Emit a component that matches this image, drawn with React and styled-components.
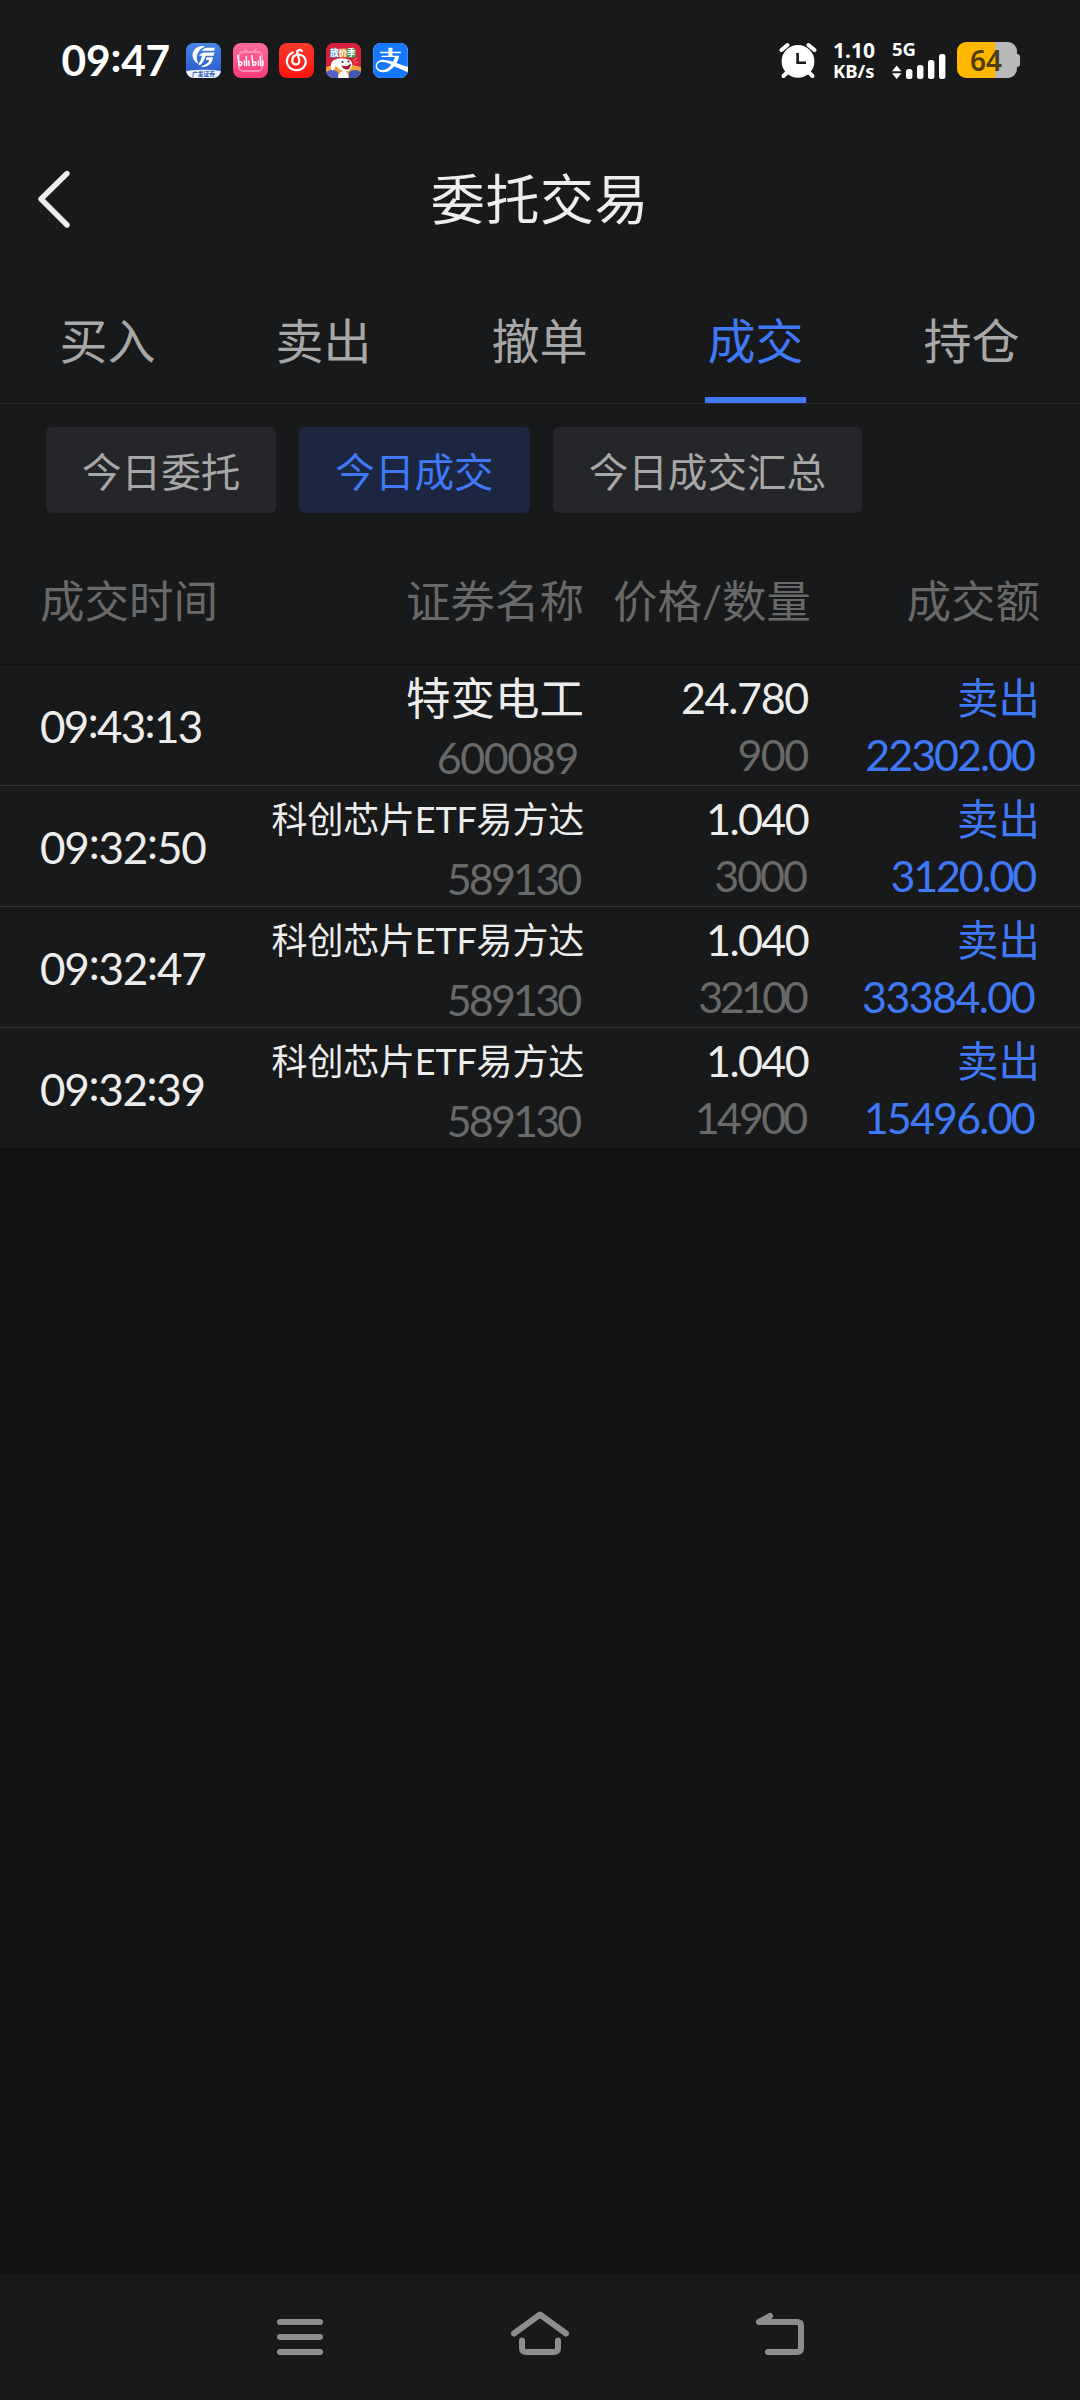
import React from "react";
import styled, { createGlobalStyle } from "styled-components";
import { SiAlipay } from "react-icons/si";

const BLUE = "#4079f8";
const PANEL = "#17191a";
const GREY = "#696969";
const LIGHT = "#ededed";

const GlobalStyle = createGlobalStyle`
  * { box-sizing: border-box; }
  body {
    margin: 0;
    background: #0f1113;
    font-family: Lato, "Noto Sans CJK SC", sans-serif;
  }
`;

const Screen = styled.div`
  width: 1080px;
  height: 2400px;
  display: flex;
  flex-direction: column;
  background: #0f1113;
  overflow: hidden;
`;

const StatusBar = styled.header`
  height: 120px;
  padding: 0 60px;
  display: flex;
  justify-content: space-between;
  align-items: center;
  background: ${PANEL};
`;

const StatusLeft = styled.div`
  display: flex;
  align-items: center;
`;

const Clock = styled.div`
  width: 126px;
  padding-left: 1.5px;
  font-size: 42.5px;
  line-height: 58px;
  font-weight: 700;
  color: #fff;
  white-space: nowrap;
  letter-spacing: ${(p) => p.$spacing}px;
`;

const Colon = styled.span`
  vertical-align: ${(p) => p.$lift}px;
  line-height: 0;
`;

const Apps = styled.div`
  display: flex;
  gap: 11.7px;
`;

const AppIcon = styled.div`
  width: 35px;
  height: 35px;
  border-radius: 8px;
  overflow: hidden;
  display: flex;
  align-items: center;
  justify-content: center;
  color: #fff;
  background: ${(p) => p.$bg};
`;

const StatusRight = styled.div`
  display: flex;
  align-items: center;
  color: #fff;
`;

const Speed = styled.div`
  width: 43px;
  margin-left: 16px;
  display: flex;
  flex-direction: column;
  font-family: "Noto Sans", sans-serif;
  font-weight: 700;
  white-space: nowrap;
`;

const SpeedValue = styled.span`
  font-size: 21px;
  line-height: 21px;
`;

const SpeedUnit = styled.span`
  font-size: 18.5px;
  line-height: 20px;
`;

const Signal = styled.div`
  width: 54px;
  margin: 0 11px 0 16px;
  display: flex;
  flex-direction: column;
  font-family: "Noto Sans", sans-serif;
`;

const Network = styled.span`
  font-size: 18.5px;
  line-height: 14px;
  font-weight: 700;
  height: 12px;
`;

const Battery = styled.div`
  display: flex;
  align-items: center;
`;

const BatteryBody = styled.div`
  width: 60px;
  height: 36px;
  padding-right: 2px;
  border-radius: 9px;
  background: linear-gradient(90deg, #ffb800 ${(p) => p.$level}%, #b9b9b9 ${(p) => p.$level}%);
  color: #4f3d0c;
  font-family: "Noto Sans", sans-serif;
  font-size: 28px;
  font-weight: 600;
  line-height: 36px;
  text-align: center;
`;

const BatteryTip = styled.div`
  width: 3px;
  height: 13px;
  border-radius: 0 3px 3px 0;
  background: #b9b9b9;
`;

const TitleBar = styled.div`
  height: 160px;
  display: grid;
  grid-template-columns: 110px 1fr 110px;
  align-items: center;
  background: ${PANEL};
`;

const BackButton = styled.button`
  border: 0;
  padding: 0 0 3px 36px;
  background: none;
  display: flex;
  color: ${LIGHT};
`;

const Title = styled.h1`
  margin: 0;
  text-align: center;
  font-size: 54px;
  font-weight: 400;
  line-height: 160px;
  letter-spacing: 0.6px;
  color: ${LIGHT};
`;

const Tabs = styled.nav`
  height: 124px;
  display: grid;
  grid-template-columns: repeat(5, 1fr);
  border-bottom: 1px solid #28292b;
  background: ${PANEL};
`;

const Tab = styled.div`
  display: flex;
  justify-content: center;
  padding-right: 1px;
  color: ${(p) => (p.$active ? BLUE : "#a7a7a7")};
`;

const TabLabel = styled.span`
  width: 101px;
  text-align: center;
  font-size: 48px;
  line-height: 121px;
  height: 123px;
  white-space: nowrap;
  border-bottom: 6px solid ${(p) => (p.$active ? BLUE : "transparent")};
`;

const Chips = styled.div`
  height: 133px;
  padding: 23px 46px;
  display: flex;
  gap: 23px;
  background: ${PANEL};
  border-bottom: 1px solid #1b1d1f;
`;

const Chip = styled.div`
  height: 86px;
  padding: 0 36px;
  border-radius: 6px;
  font-size: 39.6px;
  line-height: 89px;
  color: ${(p) => (p.$active ? BLUE : "#a7a7a7")};
  background: ${(p) => (p.$active ? "#1d2640" : "#252629")};
`;

const Columns = styled.div`
  padding: 0 40px;
  display: grid;
  grid-template-columns: 200px 344px 227px 229px;
`;

const TableHead = styled(Columns)`
  height: 128px;
  font-size: 44.5px;
  line-height: 128px;
  color: ${GREY};
  background: ${PANEL};
  border-bottom: 1px solid #0f1113;
`;

const HeadCell = styled.div`
  text-align: ${(p) => (p.$left ? "left" : "right")};
  white-space: nowrap;
`;

const TradeRow = styled(Columns)`
  height: ${(p) => (p.$last ? 120 : 121)}px;
  background: ${PANEL};
  border-bottom: ${(p) => (p.$last ? 0 : 1)}px solid #343537;
`;

const Time = styled.div`
  font-size: 44px;
  line-height: 122px;
  letter-spacing: ${(p) => p.$spacing}px;
  color: ${LIGHT};
  white-space: nowrap;
`;

const Pair = styled.div`
  display: flex;
  flex-direction: column;
  align-items: flex-end;
  white-space: nowrap;
`;

const Name = styled.span`
  font-size: ${(p) => (p.$small ? 36 : 44.5)}px;
  letter-spacing: ${(p) => (p.$small ? -0.2 : 0)}px;
  line-height: 66px;
  color: ${LIGHT};
`;

const Figure = styled.span`
  font-size: 43px;
  line-height: ${(p) => p.$line}px;
  letter-spacing: ${(p) => p.$spacing || 0}px;
  margin-right: ${(p) => p.$inset || 0}px;
  color: ${(p) => p.$color};
`;

const Side = styled.span`
  font-size: 41.5px;
  line-height: 66px;
  color: ${BLUE};
`;

const Filler = styled.main`
  flex: 1;
`;

const NavBar = styled.footer`
  height: 126px;
  padding: 0 180px 45px;
  display: grid;
  grid-template-columns: repeat(3, 1fr);
  align-items: end;
  justify-items: center;
  background: ${PANEL};
  color: #8c8d8e;
`;

const tabs = ["买入", "卖出", "撤单", "成交", "持仓"];
const chips = ["今日委托", "今日成交", "今日成交汇总"];
const trades = [
  { time: "09:43:13", name: "特变电工", code: "600089", price: "24.780", qty: "900", amount: "22302.00", ts: -1.7, cs: -1.4, ci: 6, ps: -1.3, pi: 3, qs: -1.6, qi: 3.5, as: -2, ai: 6 },
  { time: "09:32:50", name: "科创芯片ETF易方达", code: "589130", price: "1.040", qty: "3000", amount: "3120.00", ts: -1.2, cs: -2.8, ci: 4.5, ps: -1.6, pi: 3, qs: -2, qi: 5, as: -2.2, ai: 5 },
  { time: "09:32:47", name: "科创芯片ETF易方达", code: "589130", price: "1.040", qty: "32100", amount: "33384.00", ts: -1.2, cs: -2.8, ci: 4.5, ps: -1.6, pi: 3, qs: -3.6, qi: 6, as: -1.6, ai: 6 },
  { time: "09:32:39", name: "科创芯片ETF易方达", code: "589130", price: "1.040", qty: "14900", amount: "15496.00", ts: -1.3, cs: -2.8, ci: 4.5, ps: -1.6, pi: 3, qs: -2.8, qi: 5.5, as: -1.8, ai: 6 },
];

function ClockText({ value, lift }) {
  return value.split(":").map((part, i) => (
    <React.Fragment key={i}>
      {i > 0 && <Colon $lift={lift}>:</Colon>}
      {part}
    </React.Fragment>
  ));
}

function BrokerIcon() {
  return (
    <svg width="35" height="35" viewBox="0 0 35 35">
      <defs>
        <linearGradient id="broker" x1="0" y1="0" x2="0" y2="1">
          <stop offset="0" stopColor="#4b86e2" />
          <stop offset="1" stopColor="#2455cf" />
        </linearGradient>
      </defs>
      <rect width="35" height="35" fill="url(#broker)" />
      <path d="M0 28 Q17.500 25.500 35 28 V35 H0Z" fill="#eef3fd" />
      <path d="M19 3.200 C10 2 5 8.500 7 15 C8 18.500 11 20.400 12.500 20.600 C9 14 11 7.500 19 3.200Z" fill="#fff" />
      <path d="M15.500 7.800 Q18 4.800 21 4.700 H29 L28 7.800Z" fill="#fff" />
      <path d="M13 12.800 Q15.500 9.600 18 9.600 H28.500 L27.500 12.800 H19.500 Q18.500 18.500 14 22.300 Q12.500 21.800 12.300 21.300 Q15.500 17 16 12.800Z" fill="#fff" />
      <path d="M20.500 14.200 H27 Q26.500 22 18 24 Q16.500 24.200 15 23.400 Q22.500 21 23.300 17 H20Z" fill="#fff" />
      <text x="17.500" y="33.200" textAnchor="middle" fontSize="5.800" fontWeight="700" fill="#2d55c4">广发证券</text>
    </svg>
  );
}

function BilibiliIcon() {
  return (
    <svg width="35" height="35" viewBox="0 0 35 35">
      <g fill="none" stroke="#ff8fb4" strokeWidth="1.800" strokeLinecap="round">
        <rect x="6" y="9" width="23" height="19" rx="4" />
        <path d="M12 6 L14.500 9 M23 6 L20.500 9" />
      </g>
      <g fill="none" stroke="#fff" strokeWidth="1.500" strokeLinecap="round">
        <path d="M4.800 12.500 L6 22.500 C9.800 22.500 10 18.200 6 18.700 M11.400 18 L11.700 22.500 M13.200 13.500 L13.800 22.500 M15.800 18 L16 22.500" />
        <path d="M18.800 12.500 L20 22.500 C23.800 22.500 24 18.200 20 18.700 M25.400 18 L25.600 22.500 M27.200 13.500 L27.800 22.500 M29.800 18 L29.900 22.500" />
      </g>
    </svg>
  );
}

function MusicIcon() {
  return (
    <svg width="35" height="35" viewBox="0 0 35 35" fill="none" stroke="#fff" strokeWidth="2.200" strokeLinecap="round">
      <path d="M13.800 9.500 C7.500 12.500 6.500 19 9.500 23.200 C13 28.300 21.500 28.500 25.200 23.500 C28.500 18.500 26.500 11.500 18.800 11.600 C12.500 12 11.800 19.800 15.500 21.200 C19 22.300 21 19.500 20.200 16.800 L18.300 10.200 C17.600 7 20.500 6 23 8" />
    </svg>
  );
}

function SaleIcon() {
  return (
    <svg width="35" height="35" viewBox="0 0 35 35">
      <rect width="35" height="35" fill="#d4203a" />
      <path d="M0 24 Q17 18 35 24 V35 H0Z" fill="#f0a43c" />
      <path d="M0 29 Q6 25 12 29 V35 H0Z" fill="#4d62c9" />
      <path d="M23 29 Q29 25 35 29 V35 H23Z" fill="#3c58bd" />
      <rect x="4" y="5.500" width="8.500" height="9" rx="1" fill="#4a8fd6" />
      <rect x="12.500" y="5.500" width="8.500" height="9" rx="1" fill="#ef8a35" />
      <rect x="21" y="5.500" width="8.500" height="9" rx="1" fill="#35a865" />
      <text x="16.800" y="13.200" textAnchor="middle" fontSize="8.600" fontWeight="700" fill="#fff">放价季</text>
      <path d="M7 17.500 Q4 21 5 26 Q6.500 29 8.500 25.500 L10 22Z" fill="#fff" />
      <path d="M7 17.500 Q15 13.500 24 17 Q28 20 24.500 26 Q21 30.500 15 27 Q9 24 7 17.500Z" fill="#fff" />
      <path d="M12 35 Q13 27 19 28 Q22 29 22.500 35Z" fill="#fff" />
      <path d="M15.500 22 Q20 25 25 20.500 Q24.500 27 20 26.500 Q16.500 26 15.500 22Z" fill="#a01d27" />
      <circle cx="16.500" cy="19" r="1" fill="#222" />
      <circle cx="22.500" cy="18.500" r="1" fill="#222" />
      <path d="M27 18 L31 15 M28 20 L32 19" stroke="#ff7a4a" strokeWidth="1.200" />
    </svg>
  );
}

function AlarmIcon() {
  return (
    <svg width="38" height="37" viewBox="0 0 38 37">
      <g stroke="#fff" strokeLinecap="round" fill="none">
        <path d="M2.500 8 L8.500 3 M29.500 3 L35.500 8" strokeWidth="4" />
        <path d="M8 30.500 L4.500 34 M30 30.500 L33.500 34" strokeWidth="4" />
      </g>
      <circle cx="19" cy="19.300" r="16.400" fill="#fff" />
      <path d="M18.600 11 V20.700 H27" fill="none" stroke={PANEL} strokeWidth="2.600" />
    </svg>
  );
}

function SignalBars() {
  return (
    <svg width="54" height="25" viewBox="0 0 54 25">
      <path d="M0 17.200 L4.700 11.500 L9.400 17.200Z M0 19.200 L4.700 25 L9.400 19.200Z" fill="#fff" />
      <rect x="14" y="15" width="6.400" height="10" rx="2.500" fill="#fff" />
      <rect x="25" y="11" width="6.400" height="14" rx="2.500" fill="#fff" />
      <rect x="36" y="6" width="6.400" height="19" rx="2.500" fill="#fff" />
      <rect x="47" y="0" width="6.400" height="25" rx="2.500" fill="#fff" />
    </svg>
  );
}

export default function App() {
  return (
    <Screen>
      <GlobalStyle />
      <StatusBar>
        <StatusLeft>
          <Clock $spacing={-0.2}><ClockText value="09:47" lift={4} /></Clock>
          <Apps>
            <AppIcon $bg="#2f62d4"><BrokerIcon /></AppIcon>
            <AppIcon $bg="linear-gradient(#ff6a9b, #fb3a78)"><BilibiliIcon /></AppIcon>
            <AppIcon $bg="linear-gradient(#fb3a2c, #fd1411)"><MusicIcon /></AppIcon>
            <AppIcon $bg="#d4203a"><SaleIcon /></AppIcon>
            <AppIcon $bg="#fff"><SiAlipay size={35} color="#1677ff" /></AppIcon>
          </Apps>
        </StatusLeft>
        <StatusRight>
          <AlarmIcon />
          <Speed>
            <SpeedValue>1.10</SpeedValue>
            <SpeedUnit>KB/s</SpeedUnit>
          </Speed>
          <Signal>
            <Network>5G</Network>
            <SignalBars />
          </Signal>
          <Battery>
            <BatteryBody $level={63}>64</BatteryBody>
            <BatteryTip />
          </Battery>
        </StatusRight>
      </StatusBar>
      <TitleBar>
        <BackButton>
          <svg width="37" height="60" viewBox="0 0 37 60" fill="none" stroke="currentColor" strokeWidth="5.400" strokeLinecap="round" strokeLinejoin="round">
            <path d="M31 4.500 L5 30 L31 56" />
          </svg>
        </BackButton>
        <Title>委托交易</Title>
      </TitleBar>
      <Tabs>
        {tabs.map((t) => (
          <Tab key={t} $active={t === "成交"}>
            <TabLabel $active={t === "成交"}>{t}</TabLabel>
          </Tab>
        ))}
      </Tabs>
      <Chips>
        {chips.map((c) => (
          <Chip key={c} $active={c === "今日成交"}>{c}</Chip>
        ))}
      </Chips>
      <TableHead>
        <HeadCell $left>成交时间</HeadCell>
        <HeadCell>证券名称</HeadCell>
        <HeadCell>价格/数量</HeadCell>
        <HeadCell>成交额</HeadCell>
      </TableHead>
      {trades.map((t, i) => (
        <TradeRow key={t.time} $last={i === trades.length - 1}>
          <Time $spacing={t.ts}><ClockText value={t.time} lift={5} /></Time>
          <Pair>
            <Name $small={t.name.length > 6}>{t.name}</Name>
            <Figure $line={53} $spacing={t.cs} $inset={t.ci} $color={GREY}>{t.code}</Figure>
          </Pair>
          <Pair>
            <Figure $line={65} $spacing={t.ps} $inset={t.pi} $color={LIGHT}>{t.price}</Figure>
            <Figure $line={49} $spacing={t.qs} $inset={t.qi} $color={GREY}>{t.qty}</Figure>
          </Pair>
          <Pair>
            <Side>卖出</Side>
            <Figure $line={47} $spacing={t.as} $inset={t.ai} $color={BLUE}>{t.amount}</Figure>
          </Pair>
        </TradeRow>
      ))}
      <Filler />
      <NavBar>
        <svg width="46" height="36" viewBox="0 0 46 36" fill="currentColor">
          <rect width="46" height="6" rx="3" />
          <rect y="15" width="46" height="6" rx="3" />
          <rect y="30" width="46" height="6" rx="3" />
        </svg>
        <svg width="58" height="44" viewBox="0 0 58 44" fill="none" stroke="currentColor" strokeWidth="6" strokeLinecap="round" strokeLinejoin="round">
          <path d="M3 22.500 L29 3.500 L55 22.500" />
          <path d="M11 29.500 V37 Q11 41 15 41 H43 Q47 41 47 37 V29.500" />
        </svg>
        <svg width="48" height="44" viewBox="0 0 48 44" fill="none" stroke="currentColor" strokeWidth="6" strokeLinecap="round" strokeLinejoin="round">
          <path d="M14 5 L3 11 H41 Q45 11 45 15 V37 Q45 41 41 41 H12" />
        </svg>
      </NavBar>
    </Screen>
  );
}
